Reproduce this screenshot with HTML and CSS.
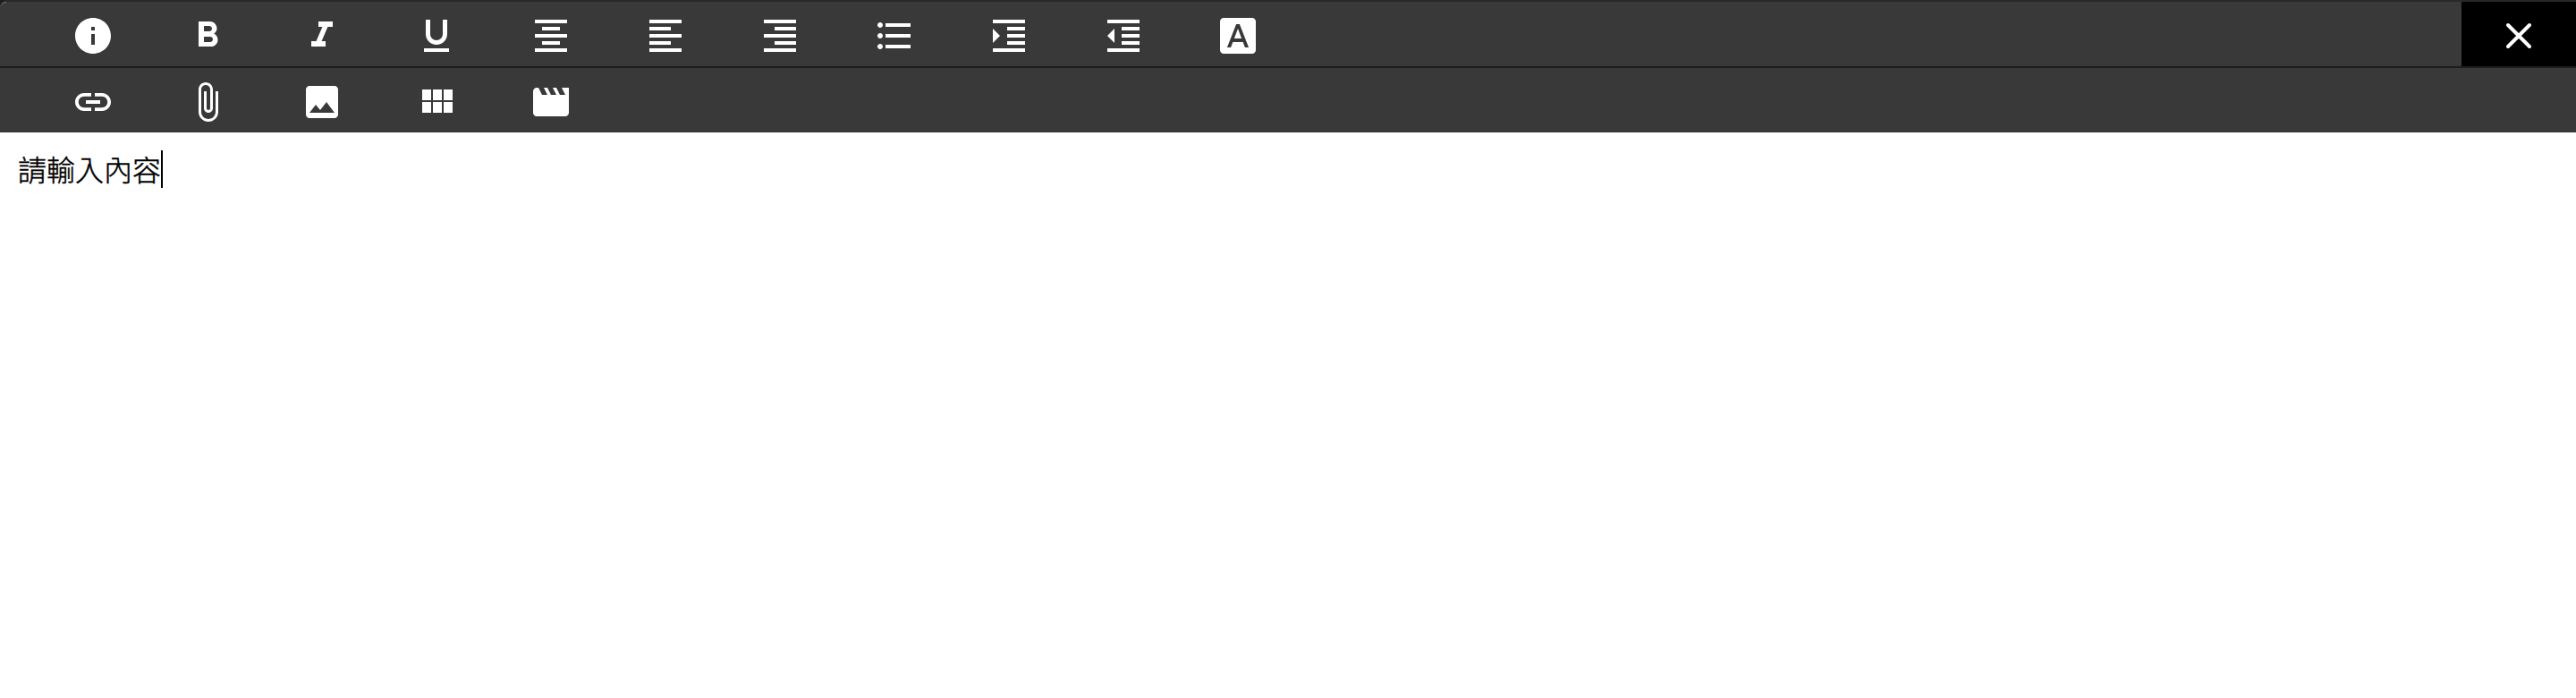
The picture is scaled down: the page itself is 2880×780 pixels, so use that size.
FILE: index.html
```html
<!DOCTYPE html>
<html lang="zh-Hant">
<head>
<meta charset="utf-8">
<title>編輯器</title>
<link rel="stylesheet" href="styles.css">
</head>
<body>
<main class="editor">
  <div class="toolbar">
    <div class="row row-main">
      <button class="tool" aria-label="說明"><svg viewBox="0 0 24 24"><path d="M12 2C6.48 2 2 6.48 2 12s4.48 10 10 10 10-4.48 10-10S17.52 2 12 2zm1 15h-2v-6h2v6zm0-8h-2V7h2v2z"/></svg></button>
      <button class="tool" aria-label="粗體"><svg viewBox="0 0 24 24"><path d="M15.6 10.79c.97-.67 1.65-1.77 1.65-2.79 0-2.26-1.75-4-4-4H7v14h7.04c2.09 0 3.71-1.7 3.71-3.79 0-1.52-.86-2.82-2.15-3.42zM10 6.5h3c.83 0 1.5.67 1.5 1.5s-.67 1.5-1.5 1.5h-3v-3zm3.5 9H10v-3h3.5c.83 0 1.5.67 1.5 1.5s-.67 1.5-1.5 1.5z"/></svg></button>
      <button class="tool" aria-label="斜體"><svg viewBox="0 0 24 24"><path d="M10 4v3h2.21l-3.42 8H6v3h8v-3h-2.21l3.42-8H18V4z"/></svg></button>
      <button class="tool" aria-label="底線"><svg viewBox="0 0 24 24"><path d="M12 17c3.31 0 6-2.69 6-6V3h-2.5v8c0 1.93-1.57 3.5-3.5 3.5S8.5 12.93 8.5 11V3H6v8c0 3.31 2.69 6 6 6zm-7 2v2h14v-2H5z"/></svg></button>
      <button class="tool" aria-label="置中"><svg viewBox="0 0 24 24"><path d="M7 15v2h10v-2H7zm-4 6h18v-2H3v2zm0-8h18v-2H3v2zm4-6v2h10V7H7zM3 3v2h18V3H3z"/></svg></button>
      <button class="tool" aria-label="靠左"><svg viewBox="0 0 24 24"><path d="M15 15H3v2h12v-2zm0-8H3v2h12V7zM3 13h18v-2H3v2zm0 8h18v-2H3v2zM3 3v2h18V3H3z"/></svg></button>
      <button class="tool" aria-label="靠右"><svg viewBox="0 0 24 24"><path d="M3 21h18v-2H3v2zm6-4h12v-2H9v2zm-6-4h18v-2H3v2zm6-4h12V7H9v2zM3 3v2h18V3H3z"/></svg></button>
      <button class="tool" aria-label="清單"><svg viewBox="0 0 24 24"><path d="M4 10.5c-.83 0-1.5.67-1.5 1.5s.67 1.5 1.5 1.5 1.5-.67 1.5-1.5-.67-1.5-1.5-1.5zm0-6c-.83 0-1.5.67-1.5 1.5S3.17 7.5 4 7.5 5.5 6.83 5.5 6 4.83 4.5 4 4.5zm0 12c-.83 0-1.5.68-1.5 1.5s.68 1.5 1.5 1.5 1.5-.68 1.5-1.5-.67-1.5-1.5-1.5zM7 19h14v-2H7v2zm0-6h14v-2H7v2zm0-8v2h14V5H7z"/></svg></button>
      <button class="tool" aria-label="增加縮排"><svg viewBox="0 0 24 24"><path d="M3 21h18v-2H3v2zM3 8v8l4-4-4-4zm8 9h10v-2H11v2zM3 3v2h18V3H3zm8 6h10V7H11v2zm0 4h10v-2H11v2z"/></svg></button>
      <button class="tool" aria-label="減少縮排"><svg viewBox="0 0 24 24"><path d="M11 17h10v-2H11v2zm-8-5l4 4V8l-4 4zm0 9h18v-2H3v2zM3 3v2h18V3H3zm8 6h10V7H11v2zm0 4h10v-2H11v2z"/></svg></button>
      <button class="tool" aria-label="字型"><svg viewBox="0 0 24 24"><path d="M9.93 13.5h4.14L12 7.98zM20 2H4c-1.1 0-2 .9-2 2v16c0 1.1.9 2 2 2h16c1.1 0 2-.9 2-2V4c0-1.1-.9-2-2-2zm-4.05 16.5l-1.14-3H9.17l-1.12 3H5.96l5.11-13h1.86l5.11 13h-2.09z"/></svg></button>
      <button class="tool close" aria-label="關閉"><svg viewBox="0 0 24 24"><path d="M6 6l12 12M18 6L6 18"/></svg></button>
    </div>
    <div class="row">
      <button class="tool" aria-label="連結"><svg viewBox="0 0 24 24"><path d="M3.9 12c0-1.71 1.39-3.1 3.1-3.1h4V7H7c-2.76 0-5 2.24-5 5s2.24 5 5 5h4v-1.9H7c-1.71 0-3.1-1.39-3.1-3.1zM8 13h8v-2H8v2zm9-6h-4v1.9h4c1.71 0 3.1 1.39 3.1 3.1s-1.39 3.1-3.1 3.1h-4V17h4c2.76 0 5-2.24 5-5s-2.24-5-5-5z"/></svg></button>
      <button class="tool" aria-label="附件"><svg viewBox="0 0 24 24"><path d="M16.5 6v11.5c0 2.21-1.79 4-4 4s-4-1.79-4-4V5c0-1.38 1.12-2.5 2.5-2.5s2.5 1.12 2.5 2.5v10.5c0 .55-.45 1-1 1s-1-.45-1-1V6H10v9.5c0 1.38 1.12 2.5 2.5 2.5s2.5-1.12 2.5-2.5V5c0-2.21-1.79-4-4-4S7 2.79 7 5v12.5c0 3.04 2.46 5.5 5.5 5.5s5.5-2.46 5.5-5.5V6h-1.5z"/></svg></button>
      <button class="tool" aria-label="圖片"><svg viewBox="0 0 24 24"><path d="M21 19V5c0-1.1-.9-2-2-2H5c-1.1 0-2 .9-2 2v14c0 1.1.9 2 2 2h14c1.1 0 2-.9 2-2zM8.5 13.5l2.5 3.01L14.5 12l4.5 6H5l3.5-4.5z"/></svg></button>
      <button class="tool" aria-label="表格"><svg viewBox="0 0 24 24"><path d="M4 11h5V5H4v6zm0 7h5v-6H4v6zm6 0h5v-6h-5v6zm6 0h5v-6h-5v6zm-6-7h5V5h-5v6zm6-6v6h5V5h-5z"/></svg></button>
      <button class="tool" aria-label="影片"><svg viewBox="0 0 24 24"><path d="M18 4l2 4h-3l-2-4h-2l2 4h-3l-2-4H8l2 4H7L5 4H4c-1.1 0-1.99.9-1.99 2L2 18c0 1.1.9 2 2 2h16c1.1 0 2-.9 2-2V4h-4z"/></svg></button>
    </div>
  </div>
  <div class="content">請輸入內容<span class="caret"></span></div>
</main>
</body>
</html>
```
FILE: styles.css
```css
* { box-sizing: border-box; }
body { margin: 0; background: #fff; }
.editor { display: flex; flex-direction: column; height: 780px; overflow: hidden; }
.toolbar { background: #1c1c1c; }
.row {
  display: flex;
  height: 72px;
  padding-left: 40px;
  background: #393939;
}
.row-main {
  position: relative;
  height: 76px;
  border-top: 2px solid #292929;
  border-bottom: 2px solid #1c1c1c;
  border-top-left-radius: 8px;
}
/* light rim on the rounded window corner */
.row-main::before {
  content: "";
  position: absolute;
  top: 0;
  left: 0;
  width: 7px;
  height: 7px;
  border-top: 1px solid #777;
  border-top-left-radius: 7px;
}
.tool {
  display: flex;
  justify-content: center;
  align-items: center;
  width: 128px;
  padding: 4px 0 0;
  border: 0;
  background: none;
}
.tool svg { display: block; width: 48px; height: 48px; fill: #fff; }
.close { margin-left: auto; background: #000; }
.close svg { fill: none; stroke: #fff; stroke-width: 2; stroke-linecap: round; }
.content {
  display: flex;
  height: 42px;
  margin: 20px 0 0 20px;
  color: #000;
  font: 300 32px/40px "Noto Sans CJK TC", sans-serif;
  -webkit-text-stroke: 0.5px #000;
}
.caret { width: 2px; height: 42px; background: #000; }
```
